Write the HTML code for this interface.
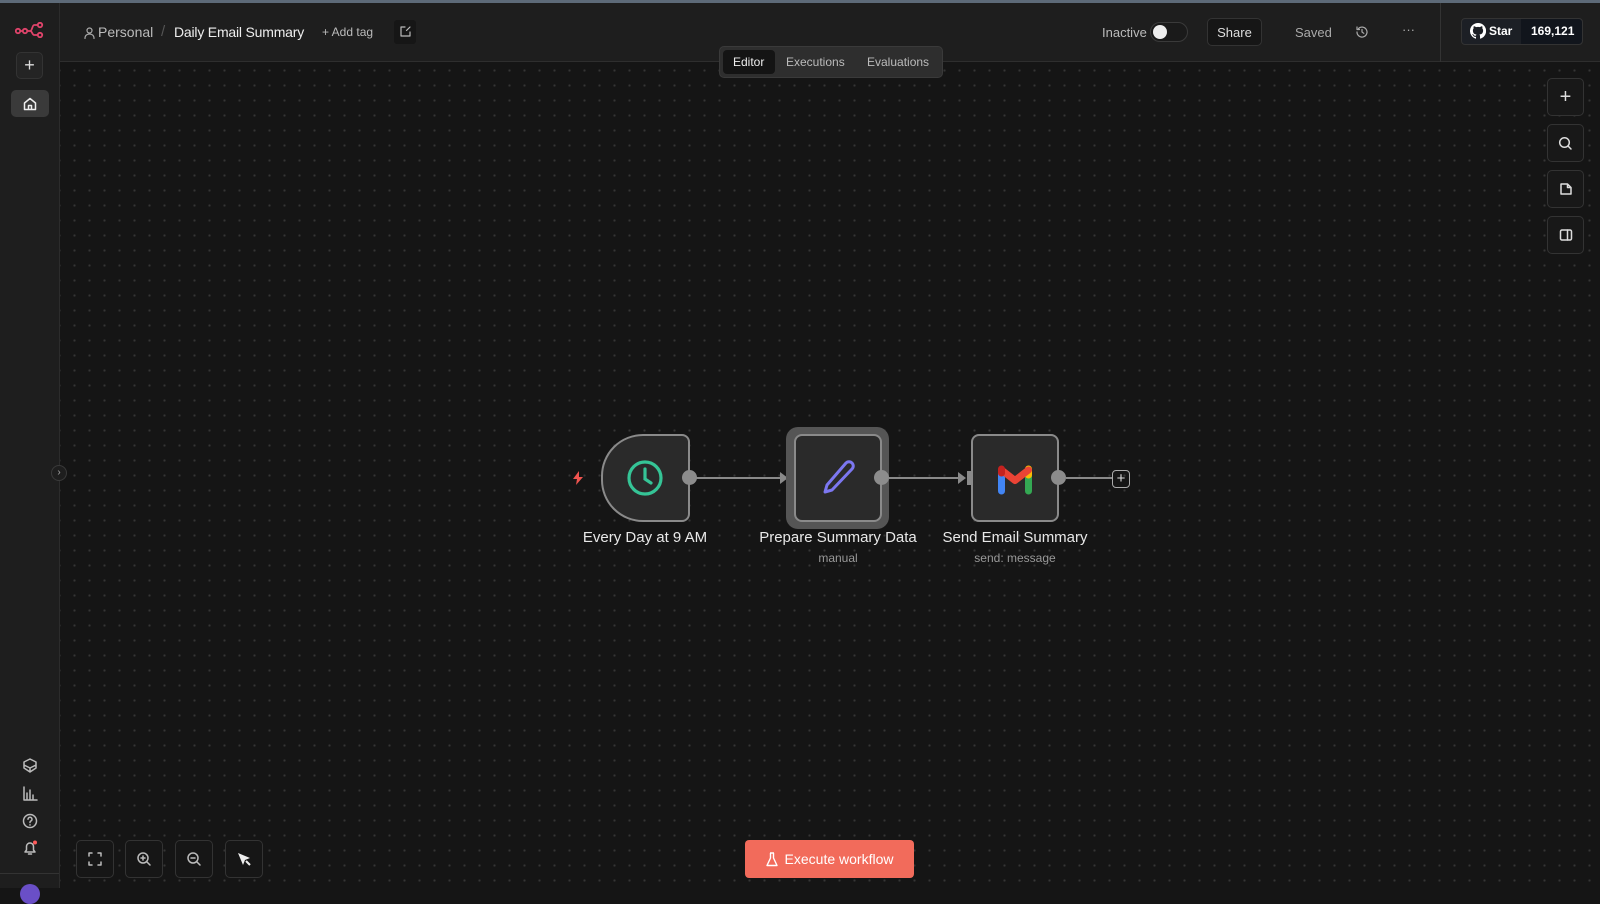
<!DOCTYPE html>
<html><head><meta charset="utf-8"><style>
*{box-sizing:border-box;margin:0;padding:0}
body{width:1600px;height:888px;overflow:hidden;background:#151515;font-family:"Liberation Sans",sans-serif;color:#ddd;position:relative}
.abs{position:absolute}
#canvas{left:60px;top:62px;right:0;bottom:0;background-color:#151515;background-image:radial-gradient(circle,#353535 1px,transparent 1.3px);background-size:15px 15px;background-position:7px 1px}
#top{left:0;top:0;width:1600px;height:3px;background:#5d6a78}
#side{left:0;top:3px;width:60px;height:885px;background:#1e1e1e;border-right:1px solid #2c2c2c}
#head{left:60px;top:3px;right:0;height:59px;background:#1e1e1e;border-bottom:1px solid #2e2e2e}
.btn{border:1px solid #333;border-radius:5px;background:#1a1a1a;display:flex;align-items:center;justify-content:center}
.t{font-size:13px;color:#ccc;white-space:nowrap}
.node{border:2px solid #8a8a8a;background:#2a2a2a;border-radius:8px}
.dot{width:15px;height:15px;border-radius:50%;background:#8c8c8c}
.lbl{font-size:15px;color:#e8e8e8;text-align:center;white-space:nowrap;transform:translateX(-50%)}
.sub{font-size:12px;color:#999;text-align:center;white-space:nowrap;transform:translateX(-50%)}
.ic{stroke:#bbb;fill:none;stroke-width:1.5;stroke-linecap:round;stroke-linejoin:round}
</style></head><body>
<div id="canvas" class="abs"></div>
<div id="top" class="abs"></div>
<div id="side" class="abs"></div>
<div id="head" class="abs"></div>

<!-- sidebar -->
<svg class="abs" style="left:15px;top:22px" width="30" height="16" viewBox="0 0 30 16"><g fill="none" stroke="#e0446b" stroke-width="1.8"><circle cx="3" cy="9" r="2.2"/><circle cx="10" cy="9" r="2.2"/><circle cx="25" cy="3" r="2.2"/><circle cx="25" cy="13" r="2.2"/><path d="M5.2 9h2.6M12.2 9h3c2 0 2-6 4-6h3.6M15.2 9c2 0 2 4 4 4h3.6"/></g></svg>
<div class="abs btn" style="left:16px;top:52px;width:27px;height:27px;background:#242424"><span style="color:#ddd;font-size:18px">+</span></div>
<div class="abs" style="left:11px;top:90px;width:38px;height:27px;border-radius:5px;background:#3a3a3a"></div>
<svg class="abs" style="left:22px;top:96px" width="16" height="16" viewBox="0 0 16 16"><path class="ic" style="stroke:#eee" d="M2.5 7L8 2.5 13.5 7v6.5h-11z M6.5 13.5v-4h3v4"/></svg>
<svg class="abs" style="left:21px;top:757px" width="18" height="18" viewBox="0 0 18 18"><path class="ic" d="M9 2l6 3v6l-6 4-6-4V5z M3 8l6 3 6-3M9 11v4"/></svg>
<svg class="abs" style="left:21px;top:785px" width="18" height="18" viewBox="0 0 18 18"><path class="ic" d="M3 2v13h13M6 14V8M9 14V5M12 14v-4"/></svg>
<svg class="abs" style="left:21px;top:812px" width="18" height="18" viewBox="0 0 18 18"><circle class="ic" cx="9" cy="9" r="6.5"/><path class="ic" d="M7 7.2a2 2 0 1 1 2.5 2c-.5.2-.5.8-.5 1.3M9 12.8v.2"/></svg>
<svg class="abs" style="left:21px;top:839px" width="18" height="18" viewBox="0 0 18 18"><path class="ic" d="M4 13h10l-1.5-2V7.5a3.5 3.5 0 0 0-7 0V11z M7.5 15h3"/><circle cx="14" cy="3.5" r="2" fill="#ff5a5a"/></svg>
<div class="abs" style="left:0;top:873px;width:59px;height:1px;background:#333"></div>
<div class="abs" style="left:20px;top:884px;width:20px;height:20px;border-radius:50%;background:#6a4fc7"></div>
<div class="abs" style="left:51px;top:465px;width:16px;height:16px;border-radius:50%;background:#1e1e1e;border:1px solid #3a3a3a;color:#aaa;font-size:10px;line-height:13px;text-align:center">›</div>

<!-- header -->
<svg class="abs" style="left:84px;top:27px" width="11" height="12" viewBox="0 0 11 12"><circle class="ic" style="stroke:#aaa;stroke-width:1.2" cx="5.5" cy="3.5" r="2.5"/><path class="ic" style="stroke:#aaa;stroke-width:1.2" d="M1 11.5c0-3 2-4.5 4.5-4.5s4.5 1.5 4.5 4.5"/></svg>
<div class="abs t" style="left:98px;top:24px;font-size:14px;color:#bbb">Personal</div>
<div class="abs t" style="left:161px;top:23px;font-size:15px;color:#555">/</div>
<div class="abs t" style="left:174px;top:24px;font-size:14px;color:#eee;letter-spacing:-0.2px">Daily Email Summary</div>
<div class="abs t" style="left:322px;top:25px;font-size:12px;color:#bbb">+ Add tag</div>
<div class="abs" style="left:394px;top:20px;width:22px;height:24px;background:#161616;border-radius:3px"></div>
<svg class="abs" style="left:399px;top:25px" width="13" height="13" viewBox="0 0 13 13"><path class="ic" style="stroke-width:1.2" d="M6 2H2v9h9V7M7.5 5.5L11 2"/></svg>

<div class="abs" style="left:719px;top:46px;width:224px;height:32px;background:#2e2e2e;border-radius:5px;border:1px solid #3a3a3a"></div>
<div class="abs" style="left:723px;top:50px;width:52px;height:24px;background:#141414;border-radius:4px"></div>
<div class="abs t" style="left:733px;top:55px;font-size:12px;color:#eee">Editor</div>
<div class="abs t" style="left:786px;top:55px;font-size:12px;color:#bbb">Executions</div>
<div class="abs t" style="left:867px;top:55px;font-size:12px;color:#bbb">Evaluations</div>

<div class="abs t" style="left:1102px;top:25px;color:#bbb">Inactive</div>
<div class="abs" style="left:1150px;top:22px;width:38px;height:20px;border-radius:10px;background:#1a1a1a;border:1px solid #3a3a3a"></div>
<div class="abs" style="left:1153px;top:25px;width:14px;height:14px;border-radius:50%;background:#eee"></div>
<div class="abs btn" style="left:1207px;top:18px;width:55px;height:28px;background:#161616"><span class="t" style="color:#ddd">Share</span></div>
<div class="abs t" style="left:1295px;top:25px;color:#aaa">Saved</div>
<svg class="abs" style="left:1355px;top:25px" width="14" height="14" viewBox="0 0 14 14"><path class="ic" style="stroke:#aaa;stroke-width:1.2" d="M2 7a5 5 0 1 0 1.5-3.5M2 2v2.5h2.5M7 4.5V7l1.8 1.3"/></svg>
<div class="abs t" style="left:1402px;top:22px;color:#aaa">···</div>
<div class="abs" style="left:1440px;top:3px;width:1px;height:59px;background:#333"></div>
<div class="abs" style="left:1461px;top:18px;width:122px;height:27px;border-radius:4px;border:1px solid #333;background:#1c1f25"></div>
<div class="abs" style="left:1521px;top:19px;width:61px;height:25px;background:#11151c;border-radius:0 4px 4px 0"></div>
<svg class="abs" style="left:1470px;top:23px" width="16" height="16" viewBox="0 0 16 16"><path fill="#fff" d="M8 0a8 8 0 0 0-2.5 15.6c.4.1.5-.2.5-.4v-1.4c-2.2.5-2.7-1-2.7-1-.4-.9-.9-1.2-.9-1.2-.7-.5.1-.5.1-.5.8.1 1.2.8 1.2.8.7 1.2 1.9.9 2.3.7.1-.5.3-.9.5-1.1-1.8-.2-3.6-.9-3.600-4 0-.9.3-1.6.8-2.1-.1-.2-.4-1 .1-2.1 0 0 .7-.2 2.2.8a7.6 7.6 0 0 1 4 0c1.5-1 2.2-.8 2.2-.8.4 1.1.2 1.9.1 2.1.5.6.8 1.3.8 2.1 0 3.1-1.9 3.8-3.7 4 .3.3.6.8.6 1.5v2.2c0 .2.1.5.6.4A8 8 0 0 0 8 0z"/></svg>
<div class="abs t" style="left:1489px;top:24px;color:#fff;font-weight:bold;font-size:12px">Star</div>
<div class="abs t" style="left:1531px;top:24px;color:#fff;font-weight:bold;font-size:12px">169,121</div>

<!-- right tools -->
<div class="abs btn" style="left:1547px;top:78px;width:37px;height:38px;background:#181818"><span style="color:#ddd;font-size:20px">+</span></div>
<div class="abs btn" style="left:1547px;top:124px;width:37px;height:38px;background:#181818"><svg width="15" height="15" viewBox="0 0 15 15"><circle class="ic" style="stroke:#ddd" cx="6.5" cy="6.5" r="4.8"/><path class="ic" style="stroke:#ddd" d="M10 10l3 3"/></svg></div>
<div class="abs btn" style="left:1547px;top:170px;width:37px;height:38px;background:#181818"><svg width="14" height="14" viewBox="0 0 14 14"><path class="ic" style="stroke:#ddd" d="M2 2h6.5l3.5 3.5V12H2z M8.5 2v3.5H12"/></svg></div>
<div class="abs btn" style="left:1547px;top:216px;width:37px;height:38px;background:#181818"><svg width="14" height="14" viewBox="0 0 14 14"><rect class="ic" style="stroke:#ddd" x="1.5" y="2" width="11" height="10" rx="1.5"/><path class="ic" style="stroke:#ddd" d="M8.5 2v10"/></svg></div>

<!-- edges -->
<div class="abs" style="left:696px;top:477px;width:90px;height:2px;background:#8a8a8a"></div>
<div class="abs" style="left:888px;top:477px;width:76px;height:2px;background:#8a8a8a"></div>
<div class="abs" style="left:1066px;top:477px;width:46px;height:2px;background:#8a8a8a"></div>
<svg class="abs" style="left:780px;top:470px" width="16" height="16"><path d="M0 2l8 6-8 6z" fill="#8a8a8a"/><rect x="9" y="1" width="6" height="14" fill="#8a8a8a"/></svg>
<svg class="abs" style="left:958px;top:470px" width="16" height="16"><path d="M0 2l8 6-8 6z" fill="#8a8a8a"/><rect x="9" y="1" width="6" height="14" fill="#8a8a8a"/></svg>

<!-- nodes -->
<svg class="abs" style="left:572px;top:471px" width="12" height="14" viewBox="0 0 12 14"><path d="M7 0L1 8h4l-1 6 7-8H7z" fill="#f0544f"/></svg>
<div class="abs node" style="left:601px;top:434px;width:89px;height:88px;border-radius:42px 8px 8px 42px"></div>
<svg class="abs" style="left:626px;top:459px" width="38" height="38" viewBox="0 0 38 38"><circle cx="19" cy="19" r="16" fill="none" stroke="#35c496" stroke-width="3.2"/><path d="M19 10v10l6 4" fill="none" stroke="#35c496" stroke-width="3.2" stroke-linecap="round"/></svg>
<div class="abs dot" style="left:682px;top:470px"></div>

<div class="abs" style="left:786px;top:427px;width:103px;height:102px;border-radius:12px;background:#555"></div>
<div class="abs node" style="left:794px;top:434px;width:88px;height:88px"></div>
<svg class="abs" style="left:819px;top:459px" width="38" height="38" viewBox="0 0 38 38"><path d="M27 4a4 4 0 0 1 6 6L13 31l-7 2 2-7z" fill="none" stroke="#7c77f0" stroke-width="3" stroke-linejoin="round"/></svg>
<div class="abs dot" style="left:874px;top:470px"></div>

<div class="abs node" style="left:971px;top:434px;width:88px;height:88px"></div>
<svg class="abs" style="left:995px;top:463px" width="40" height="32" viewBox="0 0 40 32">
<g fill="none" stroke-width="7">
<path d="M6.5 10V28" stroke="#4285f4" stroke-linecap="round"/>
<path d="M33.5 10V28" stroke="#34a853" stroke-linecap="round"/>
<path d="M33.5 6V12" stroke="#fbbc04" stroke-linecap="round"/>
<path d="M6.5 7L20 17.5 33.5 7" stroke="#ea4335" stroke-linecap="round" stroke-linejoin="round"/>
<path d="M6.5 6V10" stroke="#c5221f" stroke-linecap="round"/>
</g></svg>
<div class="abs dot" style="left:1051px;top:470px"></div>
<div class="abs" style="left:1112px;top:470px;width:18px;height:18px;border:1.5px solid #aaa;border-radius:4px;color:#ddd;font-size:15px;line-height:15px;text-align:center">+</div>

<div class="abs lbl" style="left:645px;top:529px">Every Day at 9 AM</div>
<div class="abs lbl" style="left:838px;top:529px">Prepare Summary Data</div>
<div class="abs sub" style="left:838px;top:551px">manual</div>
<div class="abs lbl" style="left:1015px;top:529px">Send Email Summary</div>
<div class="abs sub" style="left:1015px;top:551px">send: message</div>

<!-- bottom controls -->
<div class="abs btn" style="left:76px;top:840px;width:38px;height:38px;background:#161616"><svg width="14" height="14" viewBox="0 0 14 14"><path class="ic" d="M1 4V1h3M10 1h3v3M13 10v3h-3M4 13H1v-3"/></svg></div>
<div class="abs btn" style="left:125px;top:840px;width:38px;height:38px;background:#161616"><svg width="16" height="16" viewBox="0 0 16 16"><circle class="ic" cx="7" cy="7" r="5"/><path class="ic" d="M11 11l3 3M7 5v4M5 7h4"/></svg></div>
<div class="abs btn" style="left:175px;top:840px;width:38px;height:38px;background:#161616"><svg width="16" height="16" viewBox="0 0 16 16"><circle class="ic" cx="7" cy="7" r="5"/><path class="ic" d="M11 11l3 3M5 7h4"/></svg></div>
<div class="abs btn" style="left:225px;top:840px;width:38px;height:38px;background:#161616"><svg width="16" height="16" viewBox="0 0 16 16"><path d="M2 2l5 12 2-5 5-2z" fill="#eee"/><path d="M10 10l4 4" stroke="#eee" stroke-width="2"/></svg></div>

<div class="abs" style="left:745px;top:840px;width:169px;height:38px;border-radius:4px;background:#f26b5b;display:flex;align-items:center;justify-content:center;gap:7px">
<svg width="12" height="15" viewBox="0 0 12 15"><path d="M4 1h4M4.5 1v5L1 13.5h10L7.5 6V1" fill="none" stroke="#fff" stroke-width="1.4" stroke-linejoin="round"/></svg>
<span style="color:#fff;font-size:14px">Execute workflow</span></div>
</body></html>
